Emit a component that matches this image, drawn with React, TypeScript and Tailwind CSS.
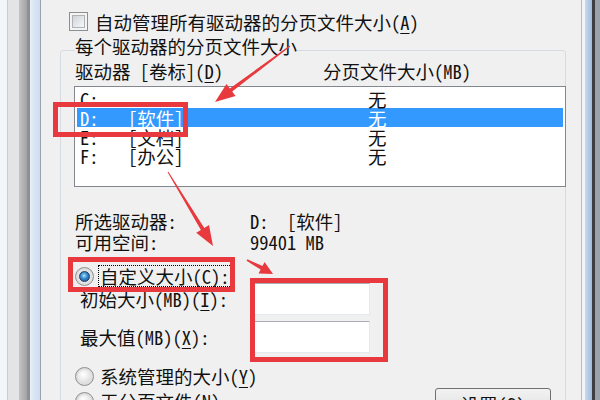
import React from "react";

const U = ({ c }: { c: string }) => <span className="underline underline-offset-[3px]">{c}</span>;

function Checkbox() {
  return (
    <div className="w-[19px] h-[19px] border border-[#8e8f8f] bg-[#f4f4f4] p-[2px] shrink-0">
      <div className="w-full h-full border border-[#aeb3b9] bg-gradient-to-br from-[#cfd3d8] to-[#f7f7f7]" />
    </div>
  );
}

function Radio({ on }: { on?: boolean }) {
  return (
    <div className="w-[19px] h-[19px] rounded-full border border-[#8e8f8f] bg-[radial-gradient(circle_at_50%_50%,#f6f6f6_0%,#dcdcdc_70%,#c4c4c4_100%)] flex items-center justify-center shrink-0">
      {on ? (
        <div className="w-[11px] h-[11px] rounded-full bg-[radial-gradient(circle_at_45%_40%,#aee6ff_0%,#3a8fd0_40%,#123e74_100%)] border border-[#1d3f6a]" />
      ) : (
        <div className="w-[13px] h-[13px] rounded-full bg-[radial-gradient(circle_at_40%_35%,#ffffff_0%,#e6e6e6_60%,#cfcfcf_100%)]" />
      )}
    </div>
  );
}

function arrowPts(x1: number, y1: number, x2: number, y2: number, w0: number, w1: number, hl: number, hw: number) {
  const dx = x2 - x1, dy = y2 - y1, L = Math.hypot(dx, dy);
  const ux = dx / L, uy = dy / L, px = -uy, py = ux;
  const bx = x2 - ux * hl, by = y2 - uy * hl;
  const p = [
    [x1 + (px * w0) / 2, y1 + (py * w0) / 2],
    [bx + (px * w1) / 2, by + (py * w1) / 2],
    [bx + (px * hw) / 2, by + (py * hw) / 2],
    [x2, y2],
    [bx - (px * hw) / 2, by - (py * hw) / 2],
    [bx - (px * w1) / 2, by - (py * w1) / 2],
    [x1 - (px * w0) / 2, y1 - (py * w0) / 2],
  ];
  return p.map((q) => q.map((v) => v.toFixed(1)).join(",")).join(" ");
}

const rows = [
  { d: "C:", l: "", sel: false },
  { d: "D:", l: "[软件]", sel: true },
  { d: "E:", l: "[文档]", sel: false },
  { d: "F:", l: "[办公]", sel: false },
];

export default function App() {
  return (
    <div className="relative w-[600px] h-[400px] overflow-hidden bg-[#f0f0f0] flex text-[18.5px] leading-[18px] text-[#111] font-['Noto_Sans_Mono_CJK_SC','Liberation_Mono','Noto_Sans_CJK_SC',monospace]">
      {/* left window frame */}
      <div className="w-[7px] bg-[#f3f6f9] shrink-0" />
      <div className="w-px bg-[#c9cbcd] shrink-0" />
      <div className="w-[11px] bg-[#e3e4e5] shrink-0" />
      <div className="w-[8px] bg-gradient-to-r from-[#c4c4c4] to-[#a3a3a3] shrink-0" />
      <div className="w-[3px] bg-[#8e9092] shrink-0" />
      <div className="w-[10px] bg-gradient-to-r from-[#e6eef8] to-[#cddcee] shrink-0" />
      <div className="w-px bg-[#9aa3ad] shrink-0" />

      {/* dialog content */}
      <div className="w-[540px] shrink-0 pt-[12px]">
        <div className="flex items-center ml-[28px] h-[19px] gap-[7px]">
          <Checkbox />
          <span className="whitespace-nowrap">
            自动管理所有驱动器的分页文件大小(<U c="A" />)
          </span>
        </div>

        <div className="relative mt-[19px] ml-[19px] w-[506px] h-[380px] border border-[#d5dbe1] rounded-[3px]">
          <div className="absolute left-[14px] top-[-14px] bg-[#f0f0f0] whitespace-nowrap">每个驱动器的分页文件大小</div>
          <div className="pl-[14px] pt-[11px]">
            <div className="flex h-[18px] whitespace-nowrap">
              <div className="w-[248px]">
                驱动器 [卷标](<U c="D" />)
              </div>
              <div>分页文件大小(MB)</div>
            </div>

            <div className="mt-[6px] ml-[-1px] w-[492px] h-[101px] border border-[#828790] bg-white px-[2px] pt-[2px]">
              {rows.map((r) => (
                <div
                  key={r.d}
                  className={`flex items-center h-[19px] pl-[3px] whitespace-nowrap ${r.sel ? "bg-[#3399ff] text-white" : ""}`}
                >
                  <div className="w-[48px]">{r.d}</div>
                  <div className="w-[240px]">{r.l}</div>
                  <div>无</div>
                </div>
              ))}
            </div>

            <div className="mt-[25px] flex whitespace-nowrap">
              <div className="w-[175px]">所选驱动器:</div>
              <div>D:&nbsp;&nbsp;[软件]</div>
            </div>
            <div className="mt-[3px] flex whitespace-nowrap">
              <div className="w-[175px]">可用空间:</div>
              <div>99401 MB</div>
            </div>

            <div className="mt-[14px] flex items-center h-[22px] gap-[4px]">
              <Radio on />
              <div className="border border-dotted border-black px-[1px] h-[22px] flex items-center whitespace-nowrap">
                自定义大小(<U c="C" />):
              </div>
            </div>

            <div className="mt-[-4px] flex flex-col gap-[6px]">
              <div className="flex items-center h-[32px]">
                <div className="w-[179px] pl-[5px] whitespace-nowrap">
                  初始大小(MB)(<U c="I" />):
                </div>
                <div className="w-[116px] h-[32px] bg-white border border-[#e3e9ef] border-t-[#abadb3]" />
              </div>
              <div className="flex items-center h-[32px]">
                <div className="w-[179px] pl-[5px] whitespace-nowrap">
                  最大值(MB)(<U c="X" />):
                </div>
                <div className="w-[116px] h-[32px] bg-white border border-[#e3e9ef] border-t-[#abadb3]" />
              </div>
            </div>

            <div className="mt-[13px] flex items-center h-[20px] gap-[6px] whitespace-nowrap">
              <Radio />
              <span>
                系统管理的大小(<U c="Y" />)
              </span>
            </div>

            <div className="mt-[2px] flex justify-between items-start">
              <div className="mt-[3px] flex items-center h-[20px] gap-[6px] whitespace-nowrap">
                <Radio />
                <span>
                  无分页文件(<U c="N" />)
                </span>
              </div>
              <div className="mr-[14px] w-[116px] h-[32px] rounded-[3px] border border-[#707070] bg-gradient-to-b from-[#f2f2f2] to-[#dcdcdc] flex items-center justify-center whitespace-nowrap">
                设置(<U c="S" />)
              </div>
            </div>
          </div>
        </div>
      </div>

      {/* right window frame */}
      <div className="w-px bg-[#b9bcbf] shrink-0" />
      <div className="w-[3px] bg-[#f2f5f8] shrink-0" />
      <div className="w-[7px] bg-gradient-to-r from-[#c9daee] to-[#9fbcdc] shrink-0" />
      <div className="w-[3px] bg-[#3d3f42] shrink-0" />
      <div className="w-[5px] bg-[#9aa2aa] shrink-0" />

      {/* red annotations */}
      <div className="absolute left-[53px] top-[102px] w-[135px] h-[35px] border-[5px] border-[#e8393e]" />
      <div className="absolute left-[68px] top-[257px] w-[167px] h-[35px] border-[5px] border-[#e8393e]" />
      <div className="absolute left-[250px] top-[278px] w-[138px] h-[84px] border-[5px] border-[#e8393e]" />
      <svg className="absolute left-0 top-0 pointer-events-none" width="600" height="400">
        <polygon points={arrowPts(290, 46, 215, 102, 1, 4, 20, 15)} fill="#e8393e" />
        <polygon points={arrowPts(168, 172, 213, 246, 1, 4, 20, 15)} fill="#e8393e" />
        <polygon points={arrowPts(247, 260, 273, 274, 1.5, 4, 13, 13)} fill="#e8393e" />
      </svg>
    </div>
  );
}
